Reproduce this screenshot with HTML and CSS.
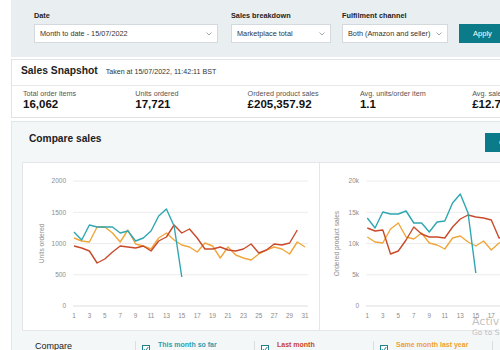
FILE: index.html
```html
<!DOCTYPE html>
<html>
<head>
<meta charset="utf-8">
<link rel="stylesheet" href="styles.css">
</head>
<body>
<div class="page">
  <div class="filters">
    <div class="field f-date">
      <div class="flabel">Date</div>
      <div class="select"><span>Month to date - 15/07/2022</span><svg class="chev" width="6" height="4" viewBox="0 0 6 4"><polyline points="0.5,0.5 3,3 5.5,0.5" fill="none" stroke="#8a8f93" stroke-width="0.8"/></svg></div>
    </div>
    <div class="field f-sales">
      <div class="flabel">Sales breakdown</div>
      <div class="select"><span>Marketplace total</span><svg class="chev" width="6" height="4" viewBox="0 0 6 4"><polyline points="0.5,0.5 3,3 5.5,0.5" fill="none" stroke="#8a8f93" stroke-width="0.8"/></svg></div>
    </div>
    <div class="field f-ful">
      <div class="flabel">Fulfilment channel</div>
      <div class="select"><span>Both (Amazon and seller)</span><svg class="chev" width="6" height="4" viewBox="0 0 6 4"><polyline points="0.5,0.5 3,3 5.5,0.5" fill="none" stroke="#8a8f93" stroke-width="0.8"/></svg></div>
    </div>
    <button class="apply">Apply</button>
  </div>

  <div class="snapshot">
    <div class="snap-head">
      <span class="snap-title">Sales Snapshot</span>
      <span class="snap-time">Taken at 15/07/2022, 11:42:11 BST</span>
    </div>
    <div class="metrics">
      <div class="metric"><div class="mlabel">Total order items</div><div class="mval">16,062</div></div>
      <div class="metric"><div class="mlabel">Units ordered</div><div class="mval">17,721</div></div>
      <div class="metric"><div class="mlabel">Ordered product sales</div><div class="mval">£205,357.92</div></div>
      <div class="metric"><div class="mlabel">Avg. units/order item</div><div class="mval">1.1</div></div>
      <div class="metric"><div class="mlabel">Avg. sales/order item</div><div class="mval">£12.79</div></div>
    </div>
  </div>

  <div class="compare">
    <div class="cmp-head">
      <span class="cmp-title">Compare sales</span>
      <button class="view-btn">Graph view</button>
    </div>
    <div class="charts">
      <div class="chart">
        <svg width="296" height="167" viewBox="0 0 296 167">
          <g class="grid">
            <line x1="50" y1="18" x2="285" y2="18"/>
            <line x1="50" y1="49.25" x2="285" y2="49.25"/>
            <line x1="50" y1="80.5" x2="285" y2="80.5"/>
            <line x1="50" y1="111.75" x2="285" y2="111.75"/>
            <line class="base" x1="50" y1="143" x2="285" y2="143"/>
          </g>
          <g class="ylab">
            <text x="43" y="20.3">2000</text>
            <text x="43" y="51.5">1500</text>
            <text x="43" y="82.8">1000</text>
            <text x="43" y="114">500</text>
            <text x="43" y="145.3">0</text>
          </g>
          <text class="atitle" transform="translate(21,80.5) rotate(-90)">Units ordered</text>
          <g class="xlab">
            <text x="51" y="154.5">1</text><text x="66.4" y="154.5">3</text><text x="81.8" y="154.5">5</text><text x="97.2" y="154.5">7</text>
            <text x="112.6" y="154.5">9</text><text x="128" y="154.5">11</text><text x="143.4" y="154.5">13</text><text x="158.8" y="154.5">15</text>
            <text x="174.2" y="154.5">17</text><text x="189.6" y="154.5">19</text><text x="205" y="154.5">21</text><text x="220.4" y="154.5">23</text>
            <text x="235.8" y="154.5">25</text><text x="251.2" y="154.5">27</text><text x="266.6" y="154.5">29</text><text x="282" y="154.5">31</text>
          </g>
          <polyline class="ln orange" points="51,75 58.7,78 66.4,79 74.1,64 81.8,64 89.5,70 97.2,79 104.9,67 112.6,81 120.3,83 128,86 135.7,75 143.4,70 151.1,77 158.8,82 166.5,84 174.2,89 181.9,80 189.6,83 197.3,95 205,84 212.7,92 220.4,95 228.1,97 235.8,91 243.5,87 251.2,84 258.9,86 266.6,91 274.3,79 282,84"/>
          <polyline class="ln red" points="51,83 58.7,85 66.4,88 74.1,100 81.8,96 89.5,89 97.2,83 104.9,84 112.6,85 120.3,83 128,88 135.7,78 143.4,74 151.1,62 158.8,70 166.5,66 174.2,75 181.9,86 189.6,86 197.3,84 205,87 212.7,88 220.4,86 228.1,81 235.8,90 243.5,87 251.2,81 258.9,82 266.6,80 274.3,67"/>
          <polyline class="ln teal" points="51,69 58.7,77 66.4,62 74.1,64 81.8,64 89.5,64 97.2,70 104.9,68 112.6,78 120.3,75 128,68 135.7,53 143.4,46 151.1,63 158.8,114"/>
        </svg>
      </div>
      <div class="chart chart-r">
        <svg width="296" height="167" viewBox="0 0 296 167">
          <g class="grid">
            <line x1="46" y1="18" x2="290" y2="18"/>
            <line x1="46" y1="49.25" x2="290" y2="49.25"/>
            <line x1="46" y1="80.5" x2="290" y2="80.5"/>
            <line x1="46" y1="111.75" x2="290" y2="111.75"/>
            <line class="base" x1="46" y1="143" x2="290" y2="143"/>
          </g>
          <g class="ylab">
            <text x="39" y="20.3">20k</text>
            <text x="39" y="51.5">15k</text>
            <text x="39" y="82.8">10k</text>
            <text x="39" y="114">5k</text>
            <text x="39" y="145.3">0</text>
          </g>
          <text class="atitle" transform="translate(19,80.5) rotate(-90)">Ordered product sales</text>
          <g class="xlab">
            <text x="47.3" y="154.5">1</text><text x="62.8" y="154.5">3</text><text x="78.3" y="154.5">5</text><text x="93.8" y="154.5">7</text>
            <text x="109.3" y="154.5">9</text><text x="124.8" y="154.5">11</text><text x="140.3" y="154.5">13</text><text x="155.8" y="154.5">15</text>
            <text x="171.3" y="154.5">17</text><text x="186.8" y="154.5">19</text><text x="202.3" y="154.5">21</text><text x="217.8" y="154.5">23</text>
            <text x="233.3" y="154.5">25</text><text x="248.8" y="154.5">27</text><text x="264.3" y="154.5">29</text><text x="279.8" y="154.5">31</text>
          </g>
          <polyline class="ln orange" points="47.3,74 55.05,79 62.8,80 70.55,66 78.3,60 86.05,74 93.8,76 101.55,70 109.3,80 117.05,82 124.8,86 132.55,75 140.3,73 148.05,79 155.8,83 163.55,78 171.3,87 179.05,80 186.8,78 194.55,85 202.3,80 210.05,84 217.8,88 225.55,83 233.3,81 241.05,78 248.8,84 256.55,80 264.3,83 272.05,77 279.8,81"/>
          <polyline class="ln red" points="47.3,65 55.05,68 62.8,67 70.55,91 78.3,88 86.05,77 93.8,64 101.55,71 109.3,74 117.05,74 124.8,75 132.55,64 140.3,56 148.05,52 155.8,54 163.55,55 171.3,57 179.05,75 186.8,72 194.55,70 202.3,74 210.05,71 217.8,69 225.55,73 233.3,70 241.05,68 248.8,72 256.55,69 264.3,66 272.05,62"/>
          <polyline class="ln teal" points="47.3,55 55.05,65 62.8,49 70.55,51 78.3,51 86.05,48 93.8,60 101.55,60 109.3,69 117.05,59 124.8,58 132.55,40 140.3,31 148.05,50 155.8,110"/>
        </svg>
      </div>
    </div>
    <div class="legend">
      <div class="lg-first">Compare</div>
      <div class="lg-item">
        <span class="cb"><svg width="6" height="6" viewBox="0 0 6 6"><polyline points="0.8,3 2.4,4.7 5.3,1" fill="none" stroke="#1f7f8c" stroke-width="1"/></svg></span>
        <span class="lg-text t-teal">This month so far</span>
      </div>
      <div class="lg-item">
        <span class="cb"><svg width="6" height="6" viewBox="0 0 6 6"><polyline points="0.8,3 2.4,4.7 5.3,1" fill="none" stroke="#1f7f8c" stroke-width="1"/></svg></span>
        <span class="lg-text t-red">Last month</span>
      </div>
      <div class="lg-item">
        <span class="cb"><svg width="6" height="6" viewBox="0 0 6 6"><polyline points="0.8,3 2.4,4.7 5.3,1" fill="none" stroke="#1f7f8c" stroke-width="1"/></svg></span>
        <span class="lg-text t-orange">Same month last year</span>
      </div>
      <div class="lg-item"></div>
    </div>
  </div>
</div>
<div class="watermark">
  <div class="wm1">Activate Windows</div>
  <div class="wm2">Go to Settings to activate Windows.</div>
</div>
</body>
</html>
```

FILE: styles.css
```css
html, body {
  margin: 0;
  padding: 0;
  background: #ffffff;
  overflow: hidden;
  width: 500px;
  height: 350px;
}
body {
  font-family: "Liberation Sans", Arial, sans-serif;
  color: #222;
  position: relative;
}
.page {
  margin-left: 11px;
  width: 617px;
}

/* filter bar */
.filters {
  background: #e9eef0;
  display: flex;
  align-items: flex-end;
  gap: 11px;
  padding: 11px 0 14px 23px;
}
.field { display: flex; flex-direction: column; }
.f-date { width: 184px; margin-right: 2px; }
.f-sales { width: 100px; }
.f-ful { width: 106px; }
.flabel {
  font-size: 7.3px;
  line-height: 9px;
  font-weight: bold;
  color: #232323;
  margin-bottom: 4px;
}
.select {
  box-sizing: border-box;
  height: 19px;
  background: #fff;
  border: 1px solid #d3d9dc;
  display: flex;
  align-items: center;
  justify-content: space-between;
  padding: 0 5px 0 5px;
  font-size: 7.3px;
  color: #333;
}
.chev { display: block; }
.apply {
  width: 47px;
  height: 19px;
  border: 0;
  background: #0b7b89;
  color: #fff;
  font-family: "Liberation Sans", Arial, sans-serif;
  font-size: 7.5px;
  padding: 0;
}

/* snapshot */
.snapshot {
  margin-top: 2px;
  border: 1px solid #e1e4e6;
  background: #fff;
}
.snap-head {
  display: flex;
  align-items: baseline;
  gap: 8px;
  padding: 5px 9px 8px;
  border-bottom: 1px solid #e6e8ea;
}
.snap-title {
  font-size: 10.3px;
  line-height: 12px;
  font-weight: bold;
  color: #1b1f23;
}
.snap-time {
  font-size: 7.1px;
  color: #333;
}
.metrics {
  display: grid;
  grid-template-columns: repeat(5, 112.3px);
  padding: 3px 0 6px 11px;
}
.mlabel {
  font-size: 7.2px;
  line-height: 9px;
  color: #555;
  white-space: nowrap;
}
.mval {
  font-size: 11.5px;
  line-height: 13px;
  font-weight: bold;
  color: #111;
  white-space: nowrap;
}

/* compare */
.compare {
  margin-top: 3px;
  background: #f4f7f8;
  border: 1px solid #e1e6e8;
  padding: 0 10px;
  height: 260px;
}
.cmp-head {
  display: flex;
  align-items: flex-start;
  padding-top: 11px;
  margin-bottom: 10px;
}
.cmp-title {
  margin-left: 7px;
  font-size: 10.2px;
  line-height: 11px;
  font-weight: bold;
  color: #1b2024;
}
.view-btn {
  margin-left: auto;
  margin-right: 62px;
  width: 70px;
  height: 19px;
  border: 0;
  background: #0b7b89;
  color: #fff;
  font-family: "Liberation Sans", Arial, sans-serif;
  font-size: 7.5px;
  text-align: left;
  padding: 0 0 0 14px;
}
.charts {
  display: grid;
  grid-template-columns: 296px 297px;
  background: #fff;
  border: 1px solid #e3e7e9;
  width: 593px;
}
.chart svg { display: block; }
.chart-r { border-left: 1px solid #e3e7e9; }
.grid line { stroke: #ececec; stroke-width: 1; }
.grid line.base { stroke: #dedede; }
.ylab text {
  font-family: "Liberation Sans", Arial, sans-serif;
  font-size: 6.5px;
  fill: #8c8c8c;
  text-anchor: end;
}
.xlab text {
  font-family: "Liberation Sans", Arial, sans-serif;
  font-size: 6.3px;
  fill: #8c8c8c;
  text-anchor: middle;
}
.atitle {
  font-family: "Liberation Sans", Arial, sans-serif;
  font-size: 6.6px;
  fill: #8c8c8c;
  text-anchor: middle;
}
.ln { fill: none; stroke-width: 1.4; stroke-linejoin: round; }
.teal { stroke: #2ea7b1; }
.red { stroke: #c94a2b; }
.orange { stroke: #f0a63a; }

.legend {
  display: flex;
  margin-top: 10px;
}
.lg-first {
  width: 100px;
  padding-left: 13px;
  font-size: 9px;
  line-height: 11px;
  color: #222;
}
.lg-item {
  width: 112px;
  height: 20px;
  border-left: 1px solid #d9dee0;
  display: flex;
  align-items: flex-start;
  padding-left: 6px;
  gap: 8px;
}
.cb {
  width: 8px;
  height: 8px;
  box-sizing: border-box;
  border: 1px solid #1f7f8c;
  background: #fff;
  margin-top: 4px;
  display: flex;
  align-items: center;
  justify-content: center;
  flex: none;
}
.cb svg { display: block; }
.lg-text {
  font-size: 7px;
  line-height: 8px;
  font-weight: bold;
}
.t-teal { color: #2a9fb0; }
.t-red { color: #c8452c; }
.t-orange { color: #f0a035; }

/* OS watermark overlay */
.watermark {
  position: absolute;
  left: 472px;
  top: 315px;
  white-space: nowrap;
  color: rgba(140, 140, 140, 0.55);
}
.wm1 { font-size: 11px; line-height: 13px; font-family: "DejaVu Sans", sans-serif; }
.wm2 { font-size: 7.5px; line-height: 9px; font-family: "DejaVu Sans", sans-serif; }
```
